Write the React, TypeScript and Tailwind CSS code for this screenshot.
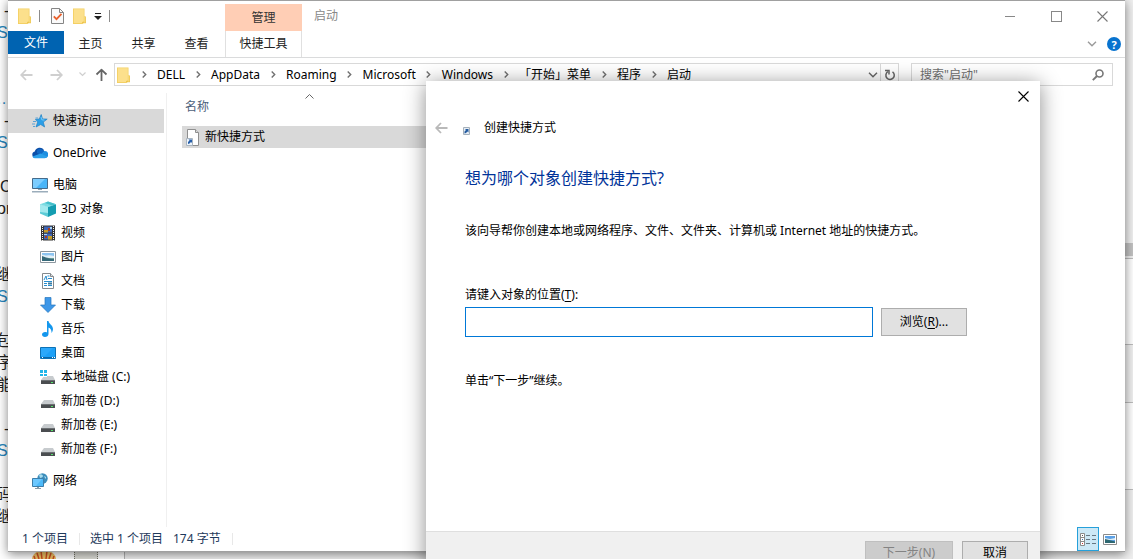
import React from "react";

type IconProps = { className?: string };

function FolderIcon({ className = "" }: IconProps) {
  return (
    <svg width="14" height="16" viewBox="0 0 14 16" className={className} aria-hidden="true">
      <path d="M0 .5h11.5V14L9.5 16H0z" fill="#f3cf60" />
      <path d="M.8 1.2h10v13.9h-10z" fill="#fce08c" />
      <path d="M11 8.5h2v6.7h-4V14l2-.5z" fill="#edc54f" />
      <path d="M11.3 9h1v5.5h-1z" fill="#fbe08a" />
    </svg>
  );
}

function CheckedPageIcon() {
  return (
    <svg width="13" height="16" viewBox="0 0 13 16" aria-hidden="true">
      <path d="M.5.5h8l4 4v11H.5z" fill="#fafafa" stroke="#858585" />
      <path d="M8.5.5v4h4" fill="none" stroke="#858585" />
      <path d="M2.800 8.300l2.700 2.800 5-5.300" fill="none" stroke="#e8602c" strokeWidth="1.8" />
    </svg>
  );
}

function MenuArrow() {
  return (
    <svg width="8" height="7" viewBox="0 0 8 7" aria-hidden="true">
      <path d="M1 0h6v1H1zM0 3h8L4 7z" fill="#222" />
    </svg>
  );
}

function ChevronRight() {
  return (
    <span className="flex w-[26px] shrink-0 justify-center">
      <svg width="5" height="7" viewBox="0 0 5 7" aria-hidden="true">
        <path d="M.7.5l3 3-3 3" fill="none" stroke="#707070" strokeWidth="1.4" />
      </svg>
    </span>
  );
}

function ChevronDown({ className = "" }: IconProps) {
  return (
    <svg width="10" height="6" viewBox="0 0 10 6" className={className} aria-hidden="true">
      <path d="M1 .8l4 4 4-4" fill="none" stroke="currentColor" strokeWidth="1.4" />
    </svg>
  );
}

function ArrowIcon({ className = "" }: IconProps) {
  return (
    <svg width="13" height="12" viewBox="0 0 13 12" className={className} aria-hidden="true">
      <path d="M1.2 6H12.5M6 1L1.2 6 6 11" fill="none" stroke="currentColor" strokeWidth="1.8" />
    </svg>
  );
}

function CloseIcon() {
  return (
    <svg width="11" height="11" viewBox="0 0 11 11" aria-hidden="true">
      <path d="M.5.5l10 10M10.5.5l-10 10" stroke="currentColor" strokeWidth="1.1" />
    </svg>
  );
}

function StarIcon() {
  return (
    <svg width="16" height="16" viewBox="0 0 16 16" aria-hidden="true">
      <path d="M9.200 1.500l1.300 4.400 4.700.2-3.900 3 1.300 4.900-3.900-2.500-4.700 2.500 1.700-4.900-2.300-2.800 3.900-.3z" fill="#2b9fe8" stroke="#2382c4" strokeWidth=".7" />
      <path d="M1 8.500h3M0 11h3M1 13.500h2M3.500 5H6" stroke="#5aa3d6" />
      <path d="M9 4l.8 2.800 2.700.3" fill="none" stroke="#7ccbf8" />
    </svg>
  );
}

function CloudIcon() {
  return (
    <svg width="16" height="16" viewBox="0 0 16 16" aria-hidden="true">
      <path d="M3.500 13A3.300 3.300 0 012.800 6.500 5.100 5.100 0 0112 5l-4.500 5z" fill="#0c4fa8" />
      <path d="M5 5.500A5.100 5.100 0 0112.600 6.200L9 10 5 8z" fill="#1268c4" />
      <path d="M9 9l3.500-3A3.500 3.500 0 0113 13H4z" fill="#1d8ee0" />
      <path d="M.5 11.500C1 13 2.500 13.200 3.500 13.200h9.300c1 0 2-.7 2.400-1.600L8.500 8.500z" fill="#2ba0ea" />
    </svg>
  );
}

function ComputerIcon() {
  return (
    <svg width="16" height="16" viewBox="0 0 16 16" aria-hidden="true">
      <path d="M.5 1.500h15v10H.5z" fill="#49b5f8" stroke="#456b8b" />
      <path d="M1 2h12L4 11H1z" fill="#7ccdff" />
      <path d="M6 12h4v1H6z" fill="#8aa0b0" />
      <path d="M0 14h16v1.500H0z" fill="#9badbb" />
    </svg>
  );
}

function CubeIcon() {
  return (
    <svg width="16" height="16" viewBox="0 0 16 16" aria-hidden="true">
      <path d="M8 .5L16 3.200 8 6 0 3.200z" fill="#7adbe2" />
      <path d="M0 3.200L8 6v10L0 12.600z" fill="#5bcbd6" />
      <path d="M0 3.200L8 6v6L0 11z" fill="#a2e9ee" />
      <path d="M16 3.200L8 6v10l8-3.400z" fill="#149db1" />
      <path d="M8 .5L16 3.200 12 4.600 5 2z" fill="#45bfcb" />
    </svg>
  );
}

function VideoIcon() {
  return (
    <svg width="16" height="16" viewBox="0 0 16 16" aria-hidden="true">
      <path d="M1 .5h14v15H1z" fill="#333" />
      <path d="M2.500 1v15M13.500 1v15" stroke="#f4f4f4" strokeWidth="1" strokeDasharray="1 1" />
      <path d="M4 1.500h8v6H4zM4 8.500h8v6H4z" fill="#3f66b8" />
      <path d="M4 5h4v2.500H4zM8 11h4v3.500H8z" fill="#c69d25" />
      <path d="M8 3h2v3H8zM5 11h2v2H5z" fill="#a53d24" />
      <path d="M10 2h2v2h-2zM4 9h3v1H4z" fill="#a6d2f5" />
    </svg>
  );
}

function PictureIcon() {
  return (
    <svg width="16" height="12" viewBox="0 0 16 12" aria-hidden="true">
      <path d="M.5.5h15v11H.5z" fill="#fff" stroke="#8c979f" />
      <path d="M2 2h12v8H2z" fill="#8cc4f1" />
      <path d="M2 4c2-1 3 1 5 .5s4-.5 7 .5v2H2z" fill="#e2f0f8" />
      <path d="M2 5l4 1.500L14 8v2H2z" fill="#356979" />
      <path d="M6 8l8-1v1z" fill="#6d9c8b" />
    </svg>
  );
}

function DocumentIcon() {
  return (
    <svg width="16" height="16" viewBox="0 0 16 16" aria-hidden="true">
      <path d="M2.500.5h8l3 3v12h-11z" fill="#fff" stroke="#84898d" />
      <path d="M10.500.5v3h3" fill="#ddd" stroke="#84898d" />
      <path d="M7.500 3h2M8 5.500h4M4 8.500h8M4 10.500h3M4 12.500h3M8 12.500h4" stroke="#278dce" />
      <path d="M4 7l2-4 1 4" fill="none" stroke="#278dce" />
      <path d="M8 9.500h4v2H8z" fill="#3d7b9e" />
    </svg>
  );
}

function DownloadIcon() {
  return (
    <svg width="16" height="16" viewBox="0 0 16 16" aria-hidden="true">
      <path d="M5 .5h6V8h4.500L8 15.500.5 8H5z" fill="#3d97e8" stroke="#2777bd" strokeWidth=".7" />
    </svg>
  );
}

function MusicIcon() {
  return (
    <svg width="16" height="16" viewBox="0 0 16 16" aria-hidden="true">
      <path d="M7 0h1.500c.3 3 4.500 4 4.500 8 0 1.500-.8 3-1.500 4 .3-3-1-4.500-3-5.500V13c0 2-1.700 3-3.500 3S2 15 2 13.500 3.500 11 5 11c.8 0 1.500.1 2 .4z" fill="#1497ed" />
    </svg>
  );
}

function DesktopIcon() {
  return (
    <svg width="16" height="12" viewBox="0 0 16 12" aria-hidden="true">
      <path d="M.5.5h15v11H.5z" fill="#1ca0f7" stroke="#0d72b6" />
      <path d="M1 1h12L5 9H1z" fill="#2ba8fb" />
      <path d="M1 10h14v1H1z" fill="#0a66a8" />
      <path d="M2 10h1v1H2zM12 10h1v1h-1zM14 10h1v1h-1z" fill="#fff" />
    </svg>
  );
}

function DiskIcon({ system = false }: { system?: boolean }) {
  return (
    <svg width="16" height="16" viewBox="0 0 16 16" aria-hidden="true">
      <path d="M4 7h9l2 4H1z" fill="#c7cbce" />
      <path d="M1 11h14v4H1z" fill="#4a4d50" />
      <path d="M1 11h14v1H1z" fill="#6c7073" />
      <path d="M11 13h2v1h-2z" fill="#55e36a" />
      {system && (
        <>
          <path d="M0 1h7v7H0z" fill="#fff" />
          <path d="M0 1h3v3H0zM4 1h3v3H4zM0 5h3v2H0zM4 5h3v2H4z" fill="#20b5e9" />
        </>
      )}
    </svg>
  );
}

function NetworkIcon() {
  return (
    <svg width="16" height="16" viewBox="0 0 16 16" aria-hidden="true">
      <circle cx="10.500" cy="5.500" r="5.200" fill="#3c8dbb" />
      <path d="M7 2c2-2 4 0 4 1S9 5 8 5zM12 3l2 1v2l-1-1z" fill="#a9dced" />
      <path d="M.5 5.500h11v8H.5z" fill="#4dbafa" stroke="#3d7eaa" />
      <path d="M1 6h9l-6 7H1z" fill="#6cc8ff" />
      <path d="M5 14h2v1h2v1H3v-1h2z" fill="#899ca8" />
    </svg>
  );
}

function ShortcutFileIcon() {
  return (
    <svg width="14" height="17" viewBox="0 0 14 17" aria-hidden="true">
      <path d="M1.500.5h8l3 3v13h-11z" fill="#fff" stroke="#8f8f8f" />
      <path d="M9.500.5v3h3" fill="#ddd" stroke="#8f8f8f" />
      <path d="M.5 9.500h6v7h-6z" fill="#eef4fa" stroke="#a9b5c0" />
      <path d="M2 15v-2l1.500-1.500L2.500 10.500H6V14l-1-1-1.500 1.500z" fill="#275faa" />
    </svg>
  );
}

function ShortcutBadge() {
  return (
    <svg width="7" height="8" viewBox="0 0 7 8" aria-hidden="true">
      <path d="M.5.5h6v7h-6z" fill="#e6edf4" stroke="#a5b0ba" />
      <path d="M1.500 6.500v-2L3 3 2 2h3.500v3.500l-1-1L3 6z" fill="#235b9f" />
    </svg>
  );
}

function ShellIcon() {
  return (
    <svg width="24" height="8" viewBox="0 0 24 8" aria-hidden="true">
      <path d="M0 8A12 9 0 0124 8z" fill="#f2c467" />
      <path d="M3 8L2 5M7 8L5 2M10 8L9 0M14 8l1-8M17 8l2-6M21 8l1-3" stroke="#cf4f22" strokeWidth="1.500" />
    </svg>
  );
}

type Entry = { label: string; icon: React.ReactNode };

const devices: Entry[] = [
  { label: "3D 对象", icon: <CubeIcon /> },
  { label: "视频", icon: <VideoIcon /> },
  { label: "图片", icon: <PictureIcon /> },
  { label: "文档", icon: <DocumentIcon /> },
  { label: "下载", icon: <DownloadIcon /> },
  { label: "音乐", icon: <MusicIcon /> },
  { label: "桌面", icon: <DesktopIcon /> },
  { label: "本地磁盘 (C:)", icon: <DiskIcon system /> },
  { label: "新加卷 (D:)", icon: <DiskIcon /> },
  { label: "新加卷 (E:)", icon: <DiskIcon /> },
  { label: "新加卷 (F:)", icon: <DiskIcon /> },
];

const crumbs = ["DELL", "AppData", "Roaming", "Microsoft", "Windows", "「开始」菜单", "程序", "启动"];

const pageLines = [
  "-", "St", "", "", "…", "-", "St", "", "C", "or", "", "", "继", "St", "", "包",
  "序", "能", "", "-", "St", "", "码", "继",
];

const lineStyles: Record<string, string> = {
  "-": "pl-2 text-[#222]",
  C: "pl-1 text-[#222]",
  or: "pl-px text-[#222]",
  St: "pl-px text-[#2585bd]",
  "…": "text-[#2585bd]",
};

function NavItem({ label, icon, nested = false, selected = false }: Entry & { nested?: boolean; selected?: boolean }) {
  return (
    <button
      type="button"
      className={`flex h-6 w-[156px] items-center gap-[5px] text-left whitespace-nowrap ${nested ? "pl-8" : "pl-6"} ${selected ? "bg-[#d9d9d9]" : ""}`}
    >
      <span className="flex size-4 shrink-0 items-center justify-center">{icon}</span>
      {label}
    </button>
  );
}

function Backdrop() {
  return (
    <div className="absolute inset-0 flex bg-white" aria-hidden="true">
      <div className="flex w-[125px] shrink-0 flex-col justify-between border-r border-[#b5b5b5]">
        <div className="w-5 overflow-hidden font-['Liberation_Sans','Noto_Sans_CJK_SC',sans-serif] text-base whitespace-nowrap">
          {pageLines.map((line, i) => (
            <div key={i} className={`-ml-1 h-[22px] leading-[22px] ${lineStyles[line] ?? "text-[#222]"}`}>
              {line}
            </div>
          ))}
        </div>
        <div className="flex gap-[18px] pl-8">
          <ShellIcon />
          <span className="h-2 w-6 border-x border-dotted border-[#77776a] bg-[#deded8]" />
        </div>
      </div>
      <div className="flex-1 bg-[#f0f0f0]" />
      <div className="flex w-2 shrink-0 flex-col bg-[#f0f0f0]">
        <div className="h-[243px]" />
        <div className="h-[13px] bg-[#c2c2c2]" />
        <div className="mt-0.5 h-[87px] border-y border-[#bdbdbd] bg-white" />
        <div className="h-[57px]" />
        <div className="h-[88px] border-y border-[#bdbdbd] bg-white" />
      </div>
    </div>
  );
}

function TitleBar() {
  return (
    <header className="flex h-[30px] shrink-0 pl-2.5">
      <div className="flex w-[207px] items-center gap-[7px]">
        <FolderIcon />
        <span className="h-3 w-px bg-[#8c8c8c]" />
        <button type="button" aria-label="属性" className="ml-1"><CheckedPageIcon /></button>
        <button type="button" aria-label="新建文件夹" className="ml-0.5"><FolderIcon /></button>
        <button type="button" aria-label="自定义快速访问工具栏"><MenuArrow /></button>
        <span className="h-3 w-px bg-[#8c8c8c]" />
      </div>
      <div className="mt-[3px] flex w-[77px] items-center justify-center bg-[#ffceb5] text-[#333]">管理</div>
      <h1 className="ml-3 flex items-center text-[#888]">启动</h1>
      <div className="ml-auto flex text-[#777]">
        <button type="button" aria-label="最小化" className="flex w-[46px] items-center justify-center">
          <span className="h-px w-2.5 bg-[#888]" />
        </button>
        <button type="button" aria-label="最大化" className="flex w-[46px] items-center justify-center">
          <span className="size-[11px] border border-[#888]" />
        </button>
        <button type="button" aria-label="关闭" className="flex w-[46px] items-center justify-center"><CloseIcon /></button>
      </div>
    </header>
  );
}

function RibbonTabs() {
  return (
    <nav aria-label="功能区" className="flex h-[27px] shrink-0 items-start border-b border-[#dadbdc] text-[#222]">
      <button type="button" className="h-[23px] w-14 bg-[#0063b1] text-white">文件</button>
      <button type="button" className="h-[26px] w-[53px]">主页</button>
      <button type="button" className="h-[26px] w-[53px]">共享</button>
      <button type="button" className="h-[26px] w-[53px]">查看</button>
      <button type="button" className="ml-0.5 h-[26px] w-[77px] border-x border-[#e0e0e0]">快捷工具</button>
      <div className="ml-auto flex h-[26px] items-center gap-2.5 pr-1">
        <button type="button" aria-label="展开功能区" className="text-[#9a9a9a]"><ChevronDown /></button>
        <button type="button" aria-label="帮助" className="flex size-3.5 items-center justify-center rounded-full bg-[#0873cf] text-[11px] leading-none font-bold text-white">?</button>
      </div>
    </nav>
  );
}

function AddressRow() {
  return (
    <div className="flex shrink-0 items-center pt-[5px] pr-3 pb-0.5 pl-3">
      <div className="flex w-[94px] shrink-0 items-center">
        <button type="button" aria-label="后退" className="w-[30px] text-[#cfcfcf]"><ArrowIcon /></button>
        <button type="button" aria-label="前进" className="w-[29px] text-[#cfcfcf]"><ArrowIcon className="rotate-180" /></button>
        <button type="button" aria-label="最近浏览的位置" className="w-4 text-[#cfcfcf]">
          <svg width="7" height="5" viewBox="0 0 7 5" aria-hidden="true"><path d="M.5.5l3 3 3-3" fill="none" stroke="currentColor" strokeWidth="1.200" /></svg>
        </button>
        <button type="button" aria-label="向上" className="text-[#666]"><ArrowIcon className="rotate-90" /></button>
      </div>
      <div className="flex h-[23px] min-w-0 flex-1 border border-[#d9d9d9]">
        <div className="flex min-w-0 flex-1 items-center overflow-hidden pl-0.5">
          <FolderIcon className="shrink-0" />
          {crumbs.map((crumb) => (
            <React.Fragment key={crumb}>
              <ChevronRight />
              <a href="#" className="whitespace-nowrap">{crumb}</a>
            </React.Fragment>
          ))}
        </div>
        <button type="button" aria-label="以前的位置" className="px-0.5 text-[#666]"><ChevronDown /></button>
        <button type="button" aria-label="刷新" className="flex w-[18px] items-center justify-center border-l border-[#d9d9d9] text-[#666]">
          <svg width="12" height="12" viewBox="0 0 12 12" aria-hidden="true">
            <path d="M8.500 2.800A4.200 4.200 0 113.800 2.700M1 1.500h4v4" fill="none" stroke="currentColor" strokeWidth="1.500" />
          </svg>
        </button>
      </div>
      <label className="ml-3 flex h-[23px] w-[202px] shrink-0 items-center border border-[#d9d9d9] pr-2 pl-2">
        <span className="sr-only">搜索</span>
        <input type="text" placeholder={'搜索"启动"'} className="w-full min-w-0 bg-transparent outline-none placeholder:text-[#707070]" />
        <svg width="12" height="12" viewBox="0 0 12 12" className="shrink-0 text-[#777]" aria-hidden="true">
          <circle cx="7.500" cy="4.500" r="3.500" fill="none" stroke="currentColor" strokeWidth="1.600" />
          <path d="M5 7L.8 11.200" stroke="currentColor" strokeWidth="1.900" />
        </svg>
      </label>
    </div>
  );
}

function Sidebar() {
  return (
    <nav aria-label="导航窗格" className="mt-[5px] flex w-[159px] shrink-0 flex-col gap-2 border-r border-[#f0f0f0] pt-4">
      <NavItem label="快速访问" icon={<StarIcon />} selected />
      <NavItem label="OneDrive" icon={<CloudIcon />} />
      <div className="flex flex-col">
        <NavItem label="电脑" icon={<ComputerIcon />} />
        {devices.map((d) => (
          <NavItem key={d.label} label={d.label} icon={d.icon} nested />
        ))}
      </div>
      <NavItem label="网络" icon={<NetworkIcon />} />
    </nav>
  );
}

function FileList() {
  return (
    <div className="min-w-0 flex-1 pl-[15px]">
      <table className="w-[264px] border-collapse">
        <thead>
          <tr>
            <th scope="col" className="relative h-[38px] pl-[3px] text-left font-normal text-[#4c607a]">
              名称
              <svg width="9" height="5" viewBox="0 0 9 5" className="absolute top-1.5 left-[123px]" aria-hidden="true">
                <path d="M.5 4.500l4-4 4 4" fill="none" stroke="#666" />
              </svg>
            </th>
          </tr>
        </thead>
        <tbody>
          <tr className="bg-[#d9d9d9]">
            <td className="h-[22px] p-0">
              <div className="flex items-center gap-[5px] pl-1"><ShortcutFileIcon />新快捷方式</div>
            </td>
          </tr>
        </tbody>
      </table>
    </div>
  );
}

function StatusBar() {
  return (
    <footer className="flex h-6 shrink-0 items-center pr-1 pl-3.5 text-[#1e395b]">
      <span className="w-[57px]">1 个项目</span>
      <span className="h-3 w-px bg-[#e8e8e8]" />
      <span className="ml-2.5 w-[83px]">选中 1 个项目</span>
      <span className="w-[59px]">174 字节</span>
      <span className="h-3 w-px bg-[#e8e8e8]" />
      <div className="ml-auto flex items-center">
        <button type="button" aria-label="详细信息" className="flex h-6 w-[22px] items-center justify-center border border-[#26a0da] bg-[#cce8f6]">
          <svg width="16" height="13" viewBox="0 0 16 13" aria-hidden="true">
            <path d="M.5.5h4v12h-4zM.5 4.500h4M.5 8.500h4" fill="#fff" stroke="#8b8b8b" />
            <path d="M6 2.500h4M12 2.500h4M6 6.500h4M12 6.500h4M6 10.500h4M12 10.500h4" stroke="#667783" />
            <path d="M2 2h1v1H2z" fill="#555" /><path d="M2 6h1v1H2z" fill="#3b78b5" /><path d="M2 10h1v1H2z" fill="#c33" />
          </svg>
        </button>
        <button type="button" aria-label="大图标" className="flex h-6 w-[22px] items-center justify-center">
          <svg width="14" height="11" viewBox="0 0 14 11" aria-hidden="true">
            <path d="M.5.5h13v10H.5z" fill="#fff" stroke="#8b8b8b" />
            <path d="M2 2h10v7H2z" fill="#5ba0e5" /><path d="M2 4l5 1 5-1v2H2z" fill="#dcecf5" /><path d="M2 5l4 1 6 1.500V9H2z" fill="#2d6770" />
          </svg>
        </button>
      </div>
    </footer>
  );
}

function ShortcutDialog() {
  return (
    <section
      role="dialog"
      aria-labelledby="wizard-title"
      className="absolute top-[81px] left-[426px] flex min-h-[500px] w-[614px] flex-col bg-white shadow-[0_3px_20px_rgba(0,0,0,0.45)]"
    >
      <div className="flex h-[31px] shrink-0 justify-end pr-2.5">
        <button type="button" aria-label="关闭" className="flex w-3.5 items-center justify-center"><CloseIcon /></button>
      </div>
      <div className="flex h-8 items-center pl-[9px]">
        <button type="button" aria-label="上一步" disabled className="text-[#b9b9b9]"><ArrowIcon /></button>
        <span className="ml-[15px] pt-1.5"><ShortcutBadge /></span>
        <h2 id="wizard-title" className="ml-3.5">创建快捷方式</h2>
      </div>
      <form className="flex flex-1 flex-col px-[39px]" onSubmit={(e) => e.preventDefault()}>
        <h3 className="mt-[22px] text-base leading-6 text-[#003399]">想为哪个对象创建快捷方式?</h3>
        <p className="mt-[31px] leading-5 whitespace-nowrap">该向导帮你创建本地或网络程序、文件、文件夹、计算机或 Internet 地址的快捷方式。</p>
        <label htmlFor="target" className="mt-11 leading-5">请键入对象的位置(<u className="underline-offset-2">T</u>):</label>
        <div className="mt-0.5 flex items-center gap-2">
          <input id="target" type="text" className="h-[30px] w-[408px] border border-[#0078d7] bg-white px-1 outline-none" />
          <button type="button" className="h-7 w-[86px] border border-[#adadad] bg-[#e1e1e1]">浏览(<u className="underline-offset-2">R</u>)...</button>
        </div>
        <p className="mt-[34px] leading-5">单击“下一步”继续。</p>
      </form>
      <div className="flex h-[50px] shrink-0 items-start justify-end gap-[9px] border-t border-[#dfdfdf] bg-[#f0f0f0] pt-[9px] pr-3">
        <button type="button" disabled className="h-6 w-[88px] border border-[#bfbfbf] bg-[#cccccc] text-[#838383]">下一步(<u className="underline-offset-2">N</u>)</button>
        <button type="button" className="h-6 w-[66px] border border-[#adadad] bg-[#e1e1e1]">取消</button>
      </div>
    </section>
  );
}

export default function App() {
  return (
    <div className="relative h-screen overflow-hidden font-['Noto_Sans','Noto_Sans_CJK_SC',sans-serif] text-xs text-black" lang="zh-CN">
      <Backdrop />
      <main className="absolute inset-x-2 top-0 bottom-[7px] flex flex-col border-t border-b border-[#a0a0a0] bg-white shadow-[0_2px_10px_rgba(0,0,0,0.5)]">
        <TitleBar />
        <RibbonTabs />
        <AddressRow />
        <div className="flex min-h-0 flex-1">
          <Sidebar />
          <FileList />
        </div>
        <StatusBar />
      </main>
      <ShortcutDialog />
    </div>
  );
}
